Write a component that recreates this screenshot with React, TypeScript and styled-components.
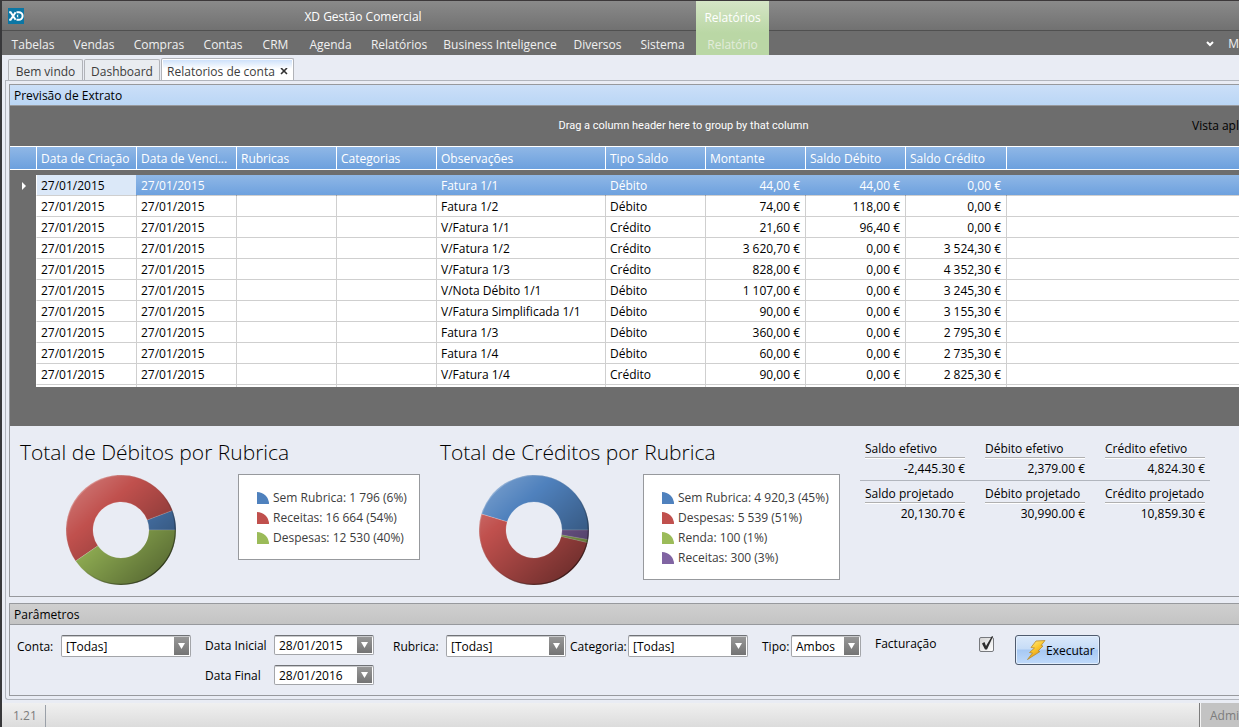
import React from "react";
import styled, { createGlobalStyle, css } from "styled-components";

const GlobalStyle = createGlobalStyle`
  *, *::before, *::after { box-sizing: border-box; }
  body {
    margin: 0;
    background: #e9ecf4;
    color: #000;
    font: 12px/16px "Open Sans", "Noto Sans", sans-serif;
    overflow: hidden;
  }
  button, input, select { font: inherit; color: inherit; }
`;

const Window = styled.div`
  display: flex;
  flex-direction: column;
  min-height: 100vh;
  border-top: 1px solid #3c383a;
  border-left: 2px solid #38383a;
  white-space: nowrap;
  overflow: hidden;
`;

/* ---------- header ---------- */

const Header = styled.header`
  display: grid;
  grid-template-columns: 694px 73px 1fr;
  grid-template-rows: 30px 24px;
  color: #fff;
  background: linear-gradient(#8a8a8a, #717171 29px, #505050 29px, #505050 30px, #6d6d6d 30px);
`;

const TitleBar = styled.div`
  display: flex;
  align-items: center;
  padding-left: 6px;
`;

const AppTitle = styled.h1`
  flex: 1;
  margin: 0;
  padding: 2px 0 0 6px;
  text-align: center;
  font-size: 12px;
  font-weight: 400;
`;

const ContextTab = styled.div`
  grid-row: 1 / 3;
  grid-column: 2;
  display: grid;
  grid-template-rows: 30px 24px;
  background: linear-gradient(#d5e5c6, #bad7a5 32px, #bad7a5);
`;

const ContextTitle = styled.span`
  padding-top: 9px;
  text-align: center;
  font-size: 12px;
`;

const Menu = styled.nav`
  grid-row: 2;
  grid-column: 1;
  display: flex;
`;

const MenuItem = styled.button<{ $w?: number; $dim?: boolean }>`
  width: ${(p) => (p.$w ? p.$w + "px" : "100%")};
  padding: 4px 0 0;
  border: 0;
  background: none;
  color: ${(p) => (p.$dim ? "#e2ecdb" : "#f0f0f0")};
  text-align: center;
`;

const MenuRight = styled.div`
  grid-row: 2;
  grid-column: 3;
  display: flex;
  justify-content: flex-end;
  align-items: center;
  gap: 14px;
  padding-top: 2px;
  color: #f0f0f0;
`;

/* ---------- document tabs ---------- */

const TabStrip = styled.div`
  display: flex;
  align-items: flex-end;
  height: 25px;
  padding-left: 6px;
`;

const Tab = styled.button<{ $active?: boolean; $w: number }>`
  display: flex;
  align-items: center;
  justify-content: center;
  gap: 5px;
  width: ${(p) => p.$w}px;
  height: 21px;
  margin-right: 1px;
  padding: 3px 0 0;
  border: 1px solid #b1b3b8;
  border-bottom: 0;
  border-radius: 2px 2px 0 0;
  background: #e9ecf0;
  color: #3c3c3c;
  ${(p) =>
    p.$active &&
    css`
      height: 23px;
      margin-bottom: -1px;
      box-shadow: inset 0 0 0 1px #fff;
      background: linear-gradient(#c9defa, #fff 10px);
    `}
`;

const Workspace = styled.main`
  flex: 1;
  display: flex;
  flex-direction: column;
  gap: 6px;
  margin: 0 0 3px 3px;
  padding: 3px 0 3px 3px;
  border: solid #b1b5bd;
  border-width: 1px 0 1px 1px;
  border-radius: 0 0 0 3px;
`;

const Panel = styled.section<{ $grow?: boolean }>`
  ${(p) => p.$grow && "flex: 1;"}
  display: flex;
  flex-direction: column;
  border: solid #97999d;
  border-width: 1px 0 1px 1px;
`;

const PanelTitle = styled.h2<{ $grey?: boolean }>`
  margin: 0;
  padding: 3px 4px 1px;
  border-bottom: 1px solid #97999d;
  background: ${(p) =>
    p.$grey ? "linear-gradient(#cfcfcf, #c4c4c4)" : "linear-gradient(#cbdff8, #bad6f5)"};
  font-size: 12px;
  font-weight: 400;
  line-height: 16px;
  height: 21px;
`;

/* ---------- statement grid ---------- */

const GridArea = styled.div`
  flex: 1;
  background: #6d6d6d;
  padding-bottom: 39px;
`;

const GroupBar = styled.div`
  display: grid;
  grid-template-columns: 1fr auto;
  align-items: center;
  height: 40px;
`;

const GroupHint = styled.span`
  padding-left: 165px;
  text-align: center;
  color: #fff;
  font-family: Roboto, "Open Sans", sans-serif;
  font-size: 11px;
`;

const Table = styled.table`
  width: 100%;
  table-layout: fixed;
  border-collapse: separate;
  border-spacing: 0;
`;

const HeadCell = styled.th`
  height: 24px;
  padding: 2px 4px 0;
  border: solid #fff;
  border-width: 1px 0 1px 1px;
  background: linear-gradient(#8fb7e6, #6ca0de);
  color: #fff;
  font-weight: 400;
  text-align: left;
  &:first-child { border-left: 0; }
`;

const SpacerCell = styled.td`
  height: 5px;
  padding: 0;
`;

const Cell = styled.td<{ $right?: boolean; $selected?: boolean; $current?: boolean }>`
  height: 21px;
  padding: 2px 5px 0 4px;
  border: solid #cfcfcf;
  border-width: 0 0 1px 1px;
  background: #fff;
  text-align: ${(p) => (p.$right ? "right" : "left")};
  &:nth-child(2) { border-left-color: #fff; }
  ${(p) =>
    p.$selected &&
    css`
      border-left-color: transparent;
      background: linear-gradient(#8fb7e6, #6ca0de) border-box;
      color: #fff;
    `}
  ${(p) =>
    p.$current &&
    css`
      background: #dbe8f8;
      color: #000;
    `}
`;

const TailCell = styled(Cell)`
  height: 2px;
  padding: 0;
  border-bottom: 0;
  line-height: 0;
`;

const GutterCell = styled.td`
  padding: 0 0 0 2px;
  text-align: center;
  line-height: 0;
`;

/* ---------- charts and totals ---------- */

const Overview = styled.div`
  display: flex;
  height: 170px;
  padding: 13px 0 0 10px;
`;

const ChartBlock = styled.div`
  width: 420px;
  flex-shrink: 0;
`;

const ChartTitle = styled.h3`
  margin: 0 0 9px;
  font-size: 21px;
  font-weight: 300;
  line-height: 26px;
`;

const ChartBody = styled.div<{ $inset: number; $gap: number }>`
  display: flex;
  align-items: flex-start;
  gap: ${(p) => p.$gap}px;
  padding-left: ${(p) => p.$inset}px;
`;

const Donut = styled.svg`
  display: block;
  margin-top: 1px;
  flex-shrink: 0;
`;

const Legend = styled.ul<{ $w: number }>`
  width: ${(p) => p.$w}px;
  margin: 0;
  padding: 13px 0 11px 18px;
  border: 1px solid #97999d;
  background: #fff;
  list-style: none;
  color: #3c3c3c;
`;

const LegendItem = styled.li`
  display: flex;
  align-items: center;
  gap: 4px;
  height: 20px;
`;

const Swatch = styled.span<{ $color: string }>`
  flex-shrink: 0;
  width: 12px;
  height: 12px;
  border-radius: 0 12px 0 0;
  background: ${(p) => p.$color};
`;

const Totals = styled.div`
  width: 350px;
  flex-shrink: 0;
`;

const TotalsRow = styled.dl`
  display: grid;
  grid-template-columns: repeat(3, 100px);
  gap: 20px;
  height: 42px;
  margin: 0 0 3px;
  padding: 0 5px;
  & + & { margin: 0; }
  &:first-child { border-bottom: 1px solid #b1b5bd; }
`;

const TotalName = styled.dt`
  height: 19px;
  line-height: 20px;
  border-bottom: 1px solid #b0b0b0;
  box-shadow: 0 1px #fff;
`;

const TotalValue = styled.dd`
  margin: 0;
  padding-top: 3px;
  text-align: right;
`;

/* ---------- parameters ---------- */

const Form = styled.form`
  display: flex;
  align-items: flex-start;
  height: 70px;
  padding: 10px 0 0 7px;
`;

const Field = styled.div<{ $gap: number }>`
  display: flex;
  align-items: center;
  flex-shrink: 0;
  margin-right: ${(p) => p.$gap}px;
`;

const Stack = styled.div`
  display: flex;
  flex-direction: column;
  gap: 10px;
`;

const Label = styled.label<{ $w: number; $flat?: boolean }>`
  width: ${(p) => p.$w}px;
  padding-top: ${(p) => (p.$flat ? 0 : 2)}px;
  line-height: 18px;
`;

const Box = styled.div<{ $w: number; $h: number }>`
  position: relative;
  width: ${(p) => p.$w}px;
  height: ${(p) => p.$h}px;
  border: 1px solid #a3a5a9;
  border-top-color: #707276;
  border-radius: 2px;
  background: #fff;
  box-shadow: inset 0 1px #c9cacc;
`;

const fieldText = css`
  display: block;
  width: 100%;
  height: 100%;
  border: 0;
  outline: 0;
  background: none;
  appearance: none;
`;

const Select = styled.select`
  ${fieldText}
  padding: 2px 20px 0 4px;
`;

const TextInput = styled.input`
  ${fieldText}
  padding: 0 20px 0 4px;
`;

const DropMark = styled.span`
  position: absolute;
  top: 1px;
  right: 1px;
  bottom: 1px;
  display: flex;
  align-items: center;
  justify-content: center;
  width: 15px;
  background: linear-gradient(#979797, #747474);
  pointer-events: none;
`;

const CheckHolder = styled.span`
  position: relative;
  display: flex;
  width: 15px;
  height: 18px;
  align-items: center;
`;

const CheckInput = styled.input`
  appearance: none;
  width: 15px;
  height: 15px;
  margin: 0;
  border: 1px solid #77797d;
  border-radius: 2px;
  background: linear-gradient(135deg, #d4d4d4, #fff);
`;

const CheckMark = styled.svg`
  position: absolute;
  left: 1px;
  top: 0;
  pointer-events: none;
`;

const RunButton = styled.button`
  display: flex;
  align-items: center;
  width: 85px;
  height: 30px;
  padding: 0 0 0 10px;
  border: 1px solid #4f5b6e;
  border-radius: 3px;
  background: linear-gradient(#dbe9fa, #c6dcf7 13px, #a6c8f3 14px, #c0dafa);
  box-shadow: inset 0 0 0 1px #e2eefc;
`;

const RunText = styled.span`
  padding-top: 2px;
`;

/* ---------- status bar ---------- */

const StatusBar = styled.footer`
  display: flex;
  justify-content: space-between;
  height: 24px;
  background: linear-gradient(#f0f0f0, #dcdcdc);
  color: #7c7c7c;
`;

const Version = styled.span`
  width: 44px;
  margin-top: 2px;
  padding: 3px 0 0 11px;
  border-right: 1px solid #9aa0a8;
`;

const User = styled.span`
  width: 40px;
  padding: 5px 0 0 10px;
  border-left: 1px solid #7c7c7c;
  background: #c3c3c3;
  box-shadow: inset 1px 0 #f4f4f4;
  overflow: hidden;
`;

/* ---------- data ---------- */

const menu: [string, number][] = [
  ["Tabelas", 62],
  ["Vendas", 60],
  ["Compras", 70],
  ["Contas", 58],
  ["CRM", 47],
  ["Agenda", 63],
  ["Relatórios", 74],
  ["Business Inteligence", 128],
  ["Diversos", 67],
  ["Sistema", 63],
];

const columns: { title: string; width?: number; right?: boolean }[] = [
  { title: "Data de Criação", width: 100 },
  { title: "Data de Venci...", width: 100 },
  { title: "Rubricas", width: 100 },
  { title: "Categorias", width: 100 },
  { title: "Observações", width: 169 },
  { title: "Tipo Saldo", width: 100 },
  { title: "Montante", width: 100, right: true },
  { title: "Saldo Débito", width: 100, right: true },
  { title: "Saldo Crédito", width: 101, right: true },
  { title: "" },
];

const day = "27/01/2015";
const rows: string[][] = [
  ["Fatura 1/1", "Débito", "44,00 €", "44,00 €", "0,00 €"],
  ["Fatura 1/2", "Débito", "74,00 €", "118,00 €", "0,00 €"],
  ["V/Fatura 1/1", "Crédito", "21,60 €", "96,40 €", "0,00 €"],
  ["V/Fatura 1/2", "Crédito", "3 620,70 €", "0,00 €", "3 524,30 €"],
  ["V/Fatura 1/3", "Crédito", "828,00 €", "0,00 €", "4 352,30 €"],
  ["V/Nota Débito 1/1", "Débito", "1 107,00 €", "0,00 €", "3 245,30 €"],
  ["V/Fatura Simplificada 1/1", "Débito", "90,00 €", "0,00 €", "3 155,30 €"],
  ["Fatura 1/3", "Débito", "360,00 €", "0,00 €", "2 795,30 €"],
  ["Fatura 1/4", "Débito", "60,00 €", "0,00 €", "2 735,30 €"],
  ["V/Fatura 1/4", "Crédito", "90,00 €", "0,00 €", "2 825,30 €"],
].map((r) => [day, day, "", "", ...r, ""]);

type Slice = { label: string; text: string; value: number; color: string };

const BLUE = "#4f81bd";
const RED = "#c0504d";
const GREEN = "#9bbb59";
const PURPLE = "#8064a2";

const debits: Slice[] = [
  { label: "Sem Rubrica", text: "1 796 (6%)", value: 1796, color: BLUE },
  { label: "Receitas", text: "16 664 (54%)", value: 16664, color: RED },
  { label: "Despesas", text: "12 530 (40%)", value: 12530, color: GREEN },
];

const credits: Slice[] = [
  { label: "Sem Rubrica", text: "4 920,3 (45%)", value: 4920.3, color: BLUE },
  { label: "Despesas", text: "5 539 (51%)", value: 5539, color: RED },
  { label: "Renda", text: "100 (1%)", value: 100, color: GREEN },
  { label: "Receitas", text: "300 (3%)", value: 300, color: PURPLE },
];

const totals: [string, string][][] = [
  [
    ["Saldo efetivo", "-2,445.30 €"],
    ["Débito efetivo", "2,379.00 €"],
    ["Crédito efetivo", "4,824.30 €"],
  ],
  [
    ["Saldo projetado", "20,130.70 €"],
    ["Débito projetado", "30,990.00 €"],
    ["Crédito projetado", "10,859.30 €"],
  ],
];

/* ---------- pieces ---------- */

const OUTER = 55;
const INNER = 28;

function point(r: number, a: number) {
  return `${OUTER + r * Math.cos(a)} ${OUTER + r * Math.sin(a)}`;
}

function ringSlice(from: number, to: number) {
  const large = from - to > Math.PI ? 1 : 0;
  return `M${point(OUTER, from)}A${OUTER} ${OUTER} 0 ${large} 0 ${point(OUTER, to)}L${point(INNER, to)}A${INNER} ${INNER} 0 ${large} 1 ${point(INNER, from)}Z`;
}

/* Slices run counter-clockwise, starting at three o'clock. */
function DonutChart({ slices, id }: { slices: Slice[]; id: string }) {
  const sum = slices.reduce((s, x) => s + x.value, 0);
  let angle = 0;
  return (
    <Donut width={110} height={110} viewBox="0 0 110 110">
      <defs>
        <linearGradient id={id} gradientUnits="userSpaceOnUse" x1="14" y1="10" x2="94" y2="100">
          <stop offset="0" stopColor="#fff" stopOpacity="0.2" />
          <stop offset="0.28" stopColor="#fff" stopOpacity="0" />
          <stop offset="0.28" stopColor="#000" stopOpacity="0" />
          <stop offset="1" stopColor="#000" stopOpacity="0.42" />
        </linearGradient>
        <linearGradient id={id + "rim"} x1="0.15" y1="0.15" x2="0.85" y2="0.85">
          <stop offset="0" stopColor="#fff" stopOpacity="0.2" />
          <stop offset="0.5" stopColor="#000" stopOpacity="0" />
          <stop offset="1" stopColor="#000" stopOpacity="0.5" />
        </linearGradient>
      </defs>
      {slices.map((s) => {
        const start = angle;
        angle -= (s.value / sum) * Math.PI * 2;
        return (
          <path
            key={s.label}
            d={ringSlice(start, angle)}
            fill={s.color}
            stroke="#fff"
            strokeOpacity="0.25"
            strokeWidth="0.8"
          />
        );
      })}
      <circle cx="55" cy="55" r="41.5" fill="none" stroke={`url(#${id})`} strokeWidth="27" />
      <circle cx="55" cy="55" r="54.3" fill="none" stroke={`url(#${id}rim)`} strokeWidth="1.2" />
    </Donut>
  );
}

function Chart(p: { id: string; title: string; slices: Slice[]; inset: number; gap: number; legend: number }) {
  return (
    <ChartBlock>
      <ChartTitle>{p.title}</ChartTitle>
      <ChartBody $inset={p.inset} $gap={p.gap}>
        <DonutChart slices={p.slices} id={p.id} />
        <Legend $w={p.legend}>
          {p.slices.map((s) => (
            <LegendItem key={s.label}>
              <Swatch $color={s.color} />
              {s.label}: {s.text}
            </LegendItem>
          ))}
        </Legend>
      </ChartBody>
    </ChartBlock>
  );
}

function DropArrow() {
  return (
    <DropMark>
      <svg width="7" height="6" viewBox="0 0 7 6">
        <path d="M0 0h7L3.5 6z" fill="#fff" />
      </svg>
    </DropMark>
  );
}

function SelectField(p: { id: string; label: string; labelW: number; w: number; value: string; gap: number }) {
  return (
    <Field $gap={p.gap}>
      <Label htmlFor={p.id} $w={p.labelW}>{p.label}</Label>
      <Box $w={p.w} $h={22}>
        <Select id={p.id} defaultValue={p.value}>
          <option>{p.value}</option>
        </Select>
        <DropArrow />
      </Box>
    </Field>
  );
}

function DateField(p: { id: string; label: string; value: string }) {
  return (
    <Field $gap={19}>
      <Label htmlFor={p.id} $w={69}>{p.label}</Label>
      <Box $w={100} $h={20}>
        <TextInput id={p.id} defaultValue={p.value} />
        <DropArrow />
      </Box>
    </Field>
  );
}

function Logo() {
  return (
    <svg width="16" height="16" viewBox="0 0 16 16">
      <rect width="16" height="16" fill="#0b76a4" />
      <path d="M1.2 4.2h1.4l5 7.6M7.6 4.2L2.6 11.8H1.2" stroke="#fff" strokeWidth="2" fill="none" />
      <path d="M8.5 4.2h2.3a3.8 3.8 0 0 1 0 7.6H8.5" stroke="#fff" strokeWidth="2" fill="none" />
      <path d="M8.6 8l1.6-2v4z" fill="#fff" />
    </svg>
  );
}

function Bolt() {
  return (
    <svg width="20" height="20" viewBox="0 0 20 20">
      <defs>
        <linearGradient id="bolt" x1="0" y1="0" x2="0.6" y2="1">
          <stop offset="0" stopColor="#fff0a0" />
          <stop offset="0.5" stopColor="#fcc92e" />
          <stop offset="1" stopColor="#e08a10" />
        </linearGradient>
      </defs>
      <path
        d="M10 1L19 0.5L15 5.5L17 6L12 11L14 11.5L1.5 19.5L6.5 13L3.5 12.5L8.5 8L5 7.5Z"
        fill="url(#bolt)"
        stroke="#b88a2c"
        strokeWidth="0.8"
        strokeLinejoin="round"
      />
    </svg>
  );
}

export default function App() {
  return (
    <>
      <GlobalStyle />
      <Window>
        <Header>
          <TitleBar>
            <Logo />
            <AppTitle>XD Gestão Comercial</AppTitle>
          </TitleBar>
          <Menu>
            {menu.map(([name, w]) => (
              <MenuItem key={name} type="button" $w={w}>{name}</MenuItem>
            ))}
          </Menu>
          <ContextTab>
            <ContextTitle>Relatórios</ContextTitle>
            <MenuItem type="button" $dim>Relatório</MenuItem>
          </ContextTab>
          <MenuRight>
            <svg width="8" height="6" viewBox="0 0 8 6">
              <path d="M1 1l3 3 3-3" fill="none" stroke="#fff" strokeWidth="2" />
            </svg>
            <span>M</span>
          </MenuRight>
        </Header>

        <TabStrip>
          <Tab type="button" $w={75}>Bem vindo</Tab>
          <Tab type="button" $w={76}>Dashboard</Tab>
          <Tab type="button" $w={133} $active>
            Relatorios de conta
            <svg width="8" height="8" viewBox="0 0 8 8">
              <path d="M1 0l6 6M7 0l-6 6" stroke="#333" strokeWidth="1.6" />
            </svg>
          </Tab>
        </TabStrip>

        <Workspace>
          <Panel $grow>
            <PanelTitle>Previsão de Extrato</PanelTitle>
            <GridArea>
              <GroupBar>
                <GroupHint>Drag a column header here to group by that column</GroupHint>
                <span>Vista apl</span>
              </GroupBar>
              <Table>
                <colgroup>
                  <col style={{ width: 26 }} />
                  {columns.map((c, i) => (
                    <col key={i} style={c.width ? { width: c.width } : undefined} />
                  ))}
                </colgroup>
                <thead>
                  <tr>
                    <HeadCell />
                    {columns.map((c, i) => (
                      <HeadCell key={i}>{c.title}</HeadCell>
                    ))}
                  </tr>
                </thead>
                <tbody>
                  <tr>
                    <SpacerCell colSpan={11} />
                  </tr>
                  {rows.map((r, ri) => (
                    <tr key={ri}>
                      <GutterCell>
                        {ri === 0 && (
                          <svg width="4" height="8" viewBox="0 0 4 8">
                            <path d="M0 0l4 4-4 4z" fill="#fff" />
                          </svg>
                        )}
                      </GutterCell>
                      {r.map((text, ci) => (
                        <Cell
                          key={ci}
                          $right={columns[ci].right}
                          $selected={ri === 0}
                          $current={ri === 0 && ci === 0}
                        >
                          {text}
                        </Cell>
                      ))}
                    </tr>
                  ))}
                  <tr>
                    <GutterCell />
                    {columns.map((_, i) => (
                      <TailCell key={i} />
                    ))}
                  </tr>
                </tbody>
              </Table>
            </GridArea>
            <Overview>
              <Chart id="debits" title="Total de Débitos por Rubrica" slices={debits} inset={46} gap={62} legend={182} />
              <Chart id="credits" title="Total de Créditos por Rubrica" slices={credits} inset={39} gap={54} legend={197} />
              <Totals>
                {totals.map((row, i) => (
                  <TotalsRow key={i}>
                    {row.map(([name, value]) => (
                      <div key={name}>
                        <TotalName>{name}</TotalName>
                        <TotalValue>{value}</TotalValue>
                      </div>
                    ))}
                  </TotalsRow>
                ))}
              </Totals>
            </Overview>
          </Panel>

          <Panel>
            <PanelTitle $grey>Parâmetros</PanelTitle>
            <Form onSubmit={(e) => e.preventDefault()}>
              <SelectField id="conta" label="Conta:" labelW={44} w={130} value="[Todas]" gap={14} />
              <Stack>
                <DateField id="inicio" label="Data Inicial" value="28/01/2015" />
                <DateField id="fim" label="Data Final" value="28/01/2016" />
              </Stack>
              <SelectField id="rubrica" label="Rubrica:" labelW={53} w={120} value="[Todas]" gap={4} />
              <SelectField id="categoria" label="Categoria:" labelW={58} w={120} value="[Todas]" gap={14} />
              <SelectField id="tipo" label="Tipo:" labelW={29} w={70} value="Ambos" gap={14} />
              <Field $gap={21}>
                <Label htmlFor="facturacao" $w={104} $flat>Facturação</Label>
                <CheckHolder>
                  <CheckInput id="facturacao" type="checkbox" defaultChecked />
                  <CheckMark width="14" height="16" viewBox="0 0 14 16">
                    <path d="M2 8.5L4.5 7L6 11L12 1L13 1.5L7 14.5H5z" fill="#2c2c2c" />
                  </CheckMark>
                </CheckHolder>
              </Field>
              <RunButton type="submit">
                <Bolt />
                <RunText>Executar</RunText>
              </RunButton>
            </Form>
          </Panel>
        </Workspace>

        <StatusBar>
          <Version>1.21</Version>
          <User>Admi</User>
        </StatusBar>
      </Window>
    </>
  );
}
